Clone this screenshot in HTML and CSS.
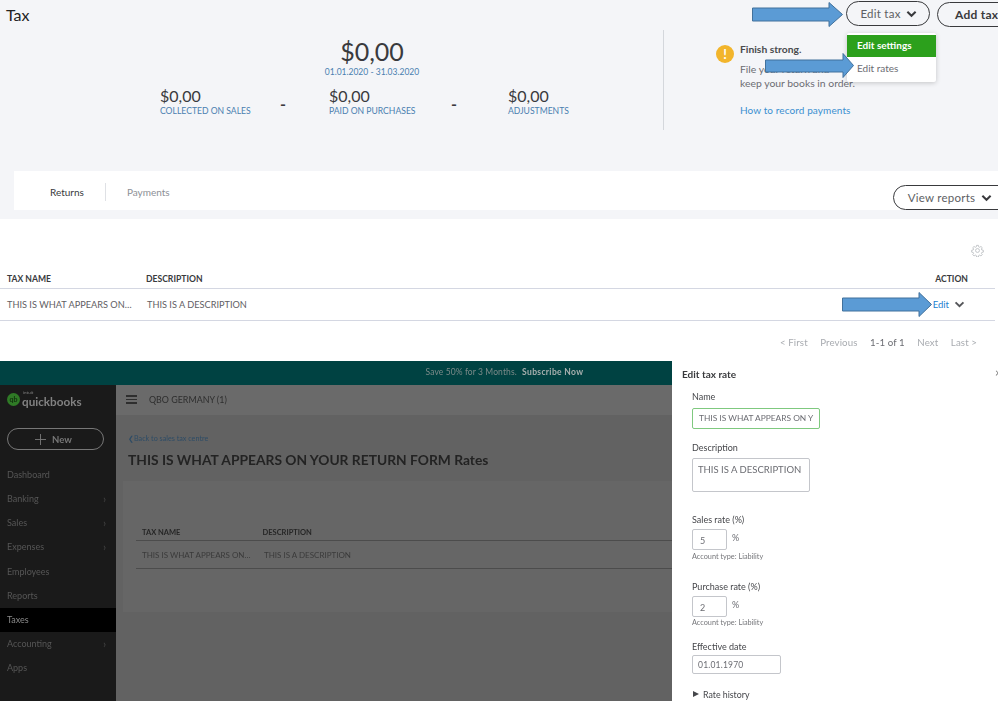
FILE: index.html
```html
<!DOCTYPE html>
<html lang="en">
<head>
<meta charset="utf-8">
<title>Tax</title>
<link rel="stylesheet" href="styles.css">
</head>
<body>
<div class="page">
  <section class="tax-top">
    <header class="tax-head">
      <h1 class="tax-title">Tax</h1>
      <div class="tax-actions">
        <button class="pill pill-edit">Edit tax <svg class="chev" viewBox="0 0 12 8"><path d="M1.500 1.500 6 6l4.500-4.500" /></svg></button>
        <button class="pill pill-add">Add tax</button>
      </div>
    </header>
    <div class="tax-summary">
      <div class="figures">
        <div class="total">
          <div class="total-amount">$0,00</div>
          <div class="total-range">01.01.2020 - 31.03.2020</div>
        </div>
        <div class="parts">
          <div class="part part-a"><div class="part-amount">$0,00</div><div class="part-label">COLLECTED ON SALES</div></div>
          <div class="minus">-</div>
          <div class="part part-b"><div class="part-amount">$0,00</div><div class="part-label">PAID ON PURCHASES</div></div>
          <div class="minus">-</div>
          <div class="part part-c"><div class="part-amount">$0,00</div><div class="part-label">ADJUSTMENTS</div></div>
        </div>
      </div>
      <aside class="notice">
        <div class="notice-icon">!</div>
        <div class="notice-body">
          <div class="notice-title">Finish strong.</div>
          <p class="notice-text">File your return and<br>keep your books in order.</p>
          <a class="notice-link">How to record payments</a>
        </div>
      </aside>
    </div>
    <nav class="tabs">
      <span class="tab tab-on">Returns</span>
      <span class="tab">Payments</span>
      <button class="pill pill-reports">View reports <svg class="chev" viewBox="0 0 12 8"><path d="M1.500 1.500 6 6l4.500-4.500" /></svg></button>
    </nav>
    <div class="menu">
      <div class="menu-item menu-item-on">Edit settings</div>
      <div class="menu-item">Edit rates</div>
    </div>
  </section>

  <section class="rates">
    <div class="gear-row">
      <svg class="gear" viewBox="0 0 24 24"><circle cx="12" cy="12" r="3.600"/><path d="M10.300 2.500h3.400l.5 2.800 1.800.8 2.400-1.600 2.400 2.400-1.600 2.400.8 1.800 2.800.5v3.400l-2.800.5-.8 1.800 1.600 2.400-2.400 2.400-2.400-1.600-1.800.8-.5 2.800h-3.400l-.5-2.800-1.800-.8-2.400 1.600-2.400-2.400 1.600-2.400-.8-1.800-2.800-.5v-3.400l2.800-.5.8-1.800-1.600-2.400 2.400-2.400 2.400 1.600 1.800-.8z"/></svg>
    </div>
    <div class="row row-head">
      <span class="col-name">TAX NAME</span>
      <span class="col-desc">DESCRIPTION</span>
      <span class="col-action">ACTION</span>
    </div>
    <div class="row row-body">
      <span class="col-name">THIS IS WHAT APPEARS ON…</span>
      <span class="col-desc">THIS IS A DESCRIPTION</span>
      <span class="col-edit"><a class="edit-link">Edit</a><svg class="chev chev-edit" viewBox="0 0 12 8"><path d="M1.500 1.500 6 6l4.500-4.500" /></svg></span>
    </div>
    <div class="pager">
      <span>&lt; First</span><span>Previous</span><span class="pager-now">1-1 of 1</span><span>Next</span><span>Last &gt;</span>
    </div>
  </section>

  <section class="app">
    <div class="app-shell">
      <div class="promo">Save 50% for 3 Months. <b>Subscribe Now</b></div>
      <div class="app-body">
        <aside class="side">
          <div class="logo">
            <span class="logo-mark">qb</span>
            <span class="logo-text"><small>intuit</small><span>quickbooks</span></span>
          </div>
          <div class="new-btn"><svg class="plus" viewBox="0 0 12 12"><path d="M6 0v12M0 6h12"/></svg>New</div>
          <ul class="side-nav">
            <li>Dashboard</li>
            <li class="has-sub">Banking</li>
            <li class="has-sub">Sales</li>
            <li class="has-sub">Expenses</li>
            <li>Employees</li>
            <li>Reports</li>
            <li class="side-on">Taxes</li>
            <li class="has-sub">Accounting</li>
            <li>Apps</li>
          </ul>
        </aside>
        <main class="app-main">
          <div class="app-top"><span class="burger"></span>QBO GERMANY (1)</div>
          <div class="app-content">
            <div class="back">❮Back to sales tax centre</div>
            <h2 class="app-title">THIS IS WHAT APPEARS ON YOUR RETURN FORM Rates</h2>
            <div class="app-card">
              <div class="app-row app-row-head"><span class="app-col-name">TAX NAME</span><span>DESCRIPTION</span></div>
              <div class="app-row app-row-body"><span class="app-col-name">THIS IS WHAT APPEARS ON…</span><span>THIS IS A DESCRIPTION</span></div>
            </div>
          </div>
        </main>
      </div>
    </div>
    <form class="panel">
      <div class="panel-title">Edit tax rate <span class="panel-close">×</span></div>
      <label class="fld-label">Name</label>
      <div class="input input-name">THIS IS WHAT APPEARS ON Y</div>
      <label class="fld-label fld-desc">Description</label>
      <div class="input input-desc">THIS IS A DESCRIPTION</div>
      <label class="fld-label fld-sales">Sales rate (%)</label>
      <div class="rate-line"><div class="input input-rate">5</div><span class="pct">%</span></div>
      <div class="hint hint-sales">Account type: Liability</div>
      <label class="fld-label fld-purchase">Purchase rate (%)</label>
      <div class="rate-line rate-line-2"><div class="input input-rate">2</div><span class="pct">%</span></div>
      <div class="hint">Account type: Liability</div>
      <label class="fld-label fld-date">Effective date</label>
      <div class="input input-date">01.01.1970</div>
      <div class="history"><span class="tri"></span>Rate history</div>
    </form>
  </section>

  <svg class="arrow arrow-1" viewBox="0 0 91 25"><path d="M.5 6h76.500V.5L90.500 12.500 77 24.500V19H.5z"/></svg>
  <svg class="arrow arrow-2" viewBox="0 0 89 25"><path d="M.5 7h77.500V.5L88.500 12.500 78 24.500V19H.5z"/></svg>
  <svg class="arrow arrow-3" viewBox="0 0 90 25"><path d="M.5 6h76.500V.5L89.500 12.500 77 24.500V19H.5z"/></svg>
</div>
</body>
</html>
```

FILE: styles.css
```css
* { box-sizing: border-box; }
html, body { margin: 0; padding: 0; background: #fff; }
body { width: 998px; height: 701px; overflow: hidden; font-family: Lato, "Open Sans", "Liberation Sans", sans-serif; color: #393a3d; }
.page { position: relative; width: 998px; height: 701px; overflow: hidden; filter: blur(.45px); }

.tax-top { position: relative; height: 219px; background: #f4f5f8; }
.tax-head { display: flex; justify-content: space-between; height: 30px; }
.tax-title { margin: 5px 0 0 6px; font-size: 16px; line-height: 20px; font-weight: 400; color: #222; }
.tax-actions { display: flex; gap: 7px; margin: 0 -30px 0 0; padding-top: 1px; }
.pill { display: flex; align-items: center; justify-content: center; height: 25px; border: 1.500px solid #393a3d; border-radius: 13px; background: #f4f5f8; font: 400 11.500px Lato, sans-serif; letter-spacing: .25px; color: #5d6063; padding: 0; white-space: nowrap; }
.pill-edit { width: 84px; gap: 5px; padding-left: 1px; }
.pill-add { width: 91px; margin-top: 1px; font-size: 12px; font-weight: 700; color: #393a3d; justify-content: flex-start; padding-left: 17px; }
.chev { width: 11px; height: 8px; fill: none; stroke: #393a3d; stroke-width: 2.200; }

.tax-summary { display: flex; height: 100px; }
.figures { width: 664px; display: flex; flex-direction: column; align-items: flex-start; border-right: 1px solid #d4d7dc; }
.total { width: 100%; text-align: center; padding-left: 81px; margin-top: 7px; }
.total-amount { font-size: 25px; line-height: 28px; color: #393a3d; }
.total-range { font-size: 8.500px; line-height: 11px; color: #4a7fb0; margin-top: 2px; }
.parts { display: flex; align-items: center; margin-top: 9px; padding-left: 160px; }
.part-amount { font-size: 16px; line-height: 17px; color: #393a3d; }
.part-label { font-size: 8.600px; line-height: 11px; margin-top: 2px; color: #4a7fb0; white-space: nowrap; }
.minus { font-size: 16px; font-weight: 700; line-height: 16px; margin-top: 3px; }
.part-a { width: 120px; }
.part-b { width: 122px; margin-left: 43px; }
.part-c { margin-left: 51px; }

.notice { display: flex; gap: 6px; padding: 15px 0 0 52px; }
.notice-icon { width: 18px; height: 18px; border-radius: 50%; background: #f2b52c; color: #fff; font-size: 13px; font-weight: 700; line-height: 18px; text-align: center; }
.notice-title { font-size: 10.300px; font-weight: 700; line-height: 12px; margin-top: -2px; color: #4a4b4e; }
.notice-text { margin: 7px 0 0; font-size: 10.400px; line-height: 14px; color: #6b6c72; white-space: nowrap; }
.notice-link { display: block; margin-top: 14px; font-size: 10px; line-height: 13px; letter-spacing: .1px; color: #3a8fd0; }

.tabs { position: relative; display: flex; align-items: center; height: 39px; margin: 41px 0 0 14px; background: #fff; padding: 3px 0 0 36px; font-size: 10px; }
.tab { color: #8d9096; }
.tab-on { color: #393a3d; padding-right: 21px; margin-right: 21px; border-right: 1px solid #dfe1e5; line-height: 18px; }
.pill-reports { position: absolute; left: 879px; top: 14px; width: 122px; height: 25px; gap: 6px; background: #fff; z-index: 1; padding-right: 8px; }

.menu { position: absolute; left: 847px; top: 33px; width: 89px; height: 49px; background: #fff; box-shadow: 0 1px 5px rgba(0,0,0,.2); border-radius: 2px; padding-top: 2px; font-size: 10px; }
.menu-item { height: 22px; line-height: 22px; padding-left: 10px; color: #6b6c72; }
.menu-item-on { background: #2ca01c; color: #fff; font-weight: 700; line-height: 20px; }

.rates { height: 142px; background: #fff; }
.gear-row { display: flex; justify-content: flex-end; height: 44px; padding: 25px 14px 0 0; }
.gear { width: 13px; height: 13px; fill: none; stroke: #b4b7bb; stroke-width: 1.400; }
.row { display: flex; align-items: center; margin-right: 3px; padding-left: 7px; white-space: nowrap; }
.row-head { height: 26px; border-bottom: 1.500px solid #d4d7e2; font-weight: 700; color: #393a3d; font-size: 8.600px; padding-top: 7px; }
.row-body { height: 32px; border-bottom: 1.500px solid #d4d7e2; color: #5f6064; font-size: 9.200px; }
.col-name { width: 139px; }
.row-body .col-name { width: 140px; }
.col-action { margin-left: auto; margin-right: 27px; }
.col-edit { display: flex; align-items: center; gap: 5px; margin-left: auto; margin-right: 30px; }
.edit-link { color: #1b80d0; font-size: 9.500px; }
.chev-edit { width: 11px; height: 7px; stroke: #55565a; }
.pager { display: flex; justify-content: flex-end; gap: 12.500px; padding: 15px 21px 0 0; font-size: 9.700px; letter-spacing: .1px; color: #a8abb0; }
.pager-now { color: #6b6c72; }

.app { display: flex; height: 340px; }
.app-shell { width: 672px; flex: none; display: flex; flex-direction: column; }
.promo { height: 24px; background: #004242; color: #7c8a89; text-align: center; font-size: 8.500px; line-height: 23px; padding-left: 337px; letter-spacing: .1px; white-space: nowrap; }
.promo b { margin-left: 3px; letter-spacing: .35px; color: #a8b0af; }
.app-body { flex: 1; display: flex; }
.side { width: 116px; background: #1a1a1a; color: #565656; font-size: 9px; }
.logo { display: flex; align-items: center; gap: 2px; height: 30px; padding: 0 0 2px 7px; }
.logo-mark { width: 13px; height: 13px; margin-top: 1px; border-radius: 50%; background: #2f7a26; color: #12300e; font-size: 7px; font-weight: 700; line-height: 12px; text-align: center; }
.logo-text { display: flex; flex-direction: column; gap: 1px; font-size: 11.700px; font-weight: 700; color: #828282; line-height: 11px; }
.logo-text small { padding-left: 1px; font-size: 4.500px; line-height: 4px; font-weight: 400; }
.new-btn { display: flex; align-items: center; justify-content: center; gap: 6px; margin: 13px 12px 0 7px; padding-right: 4px; height: 22px; border: 1px solid #777; border-radius: 11px; color: #777; font-size: 9.500px; font-weight: 700; }
.plus { width: 11px; height: 11px; fill: none; stroke: #777; stroke-width: 1; }
.side-nav { list-style: none; margin: 13px 0 0; padding: 0; }
.side-nav li { position: relative; height: 24.150px; line-height: 24px; padding-left: 7px; }
.has-sub::after { content: "›"; position: absolute; right: 10px; top: 0; color: #444; font-size: 11px; }
.side-nav .side-on { background: #000; color: #8a8a8a; }

.app-main { flex: 1; display: flex; flex-direction: column; background: #626262; }
.app-top { display: flex; align-items: center; height: 30px; padding: 0 0 1px 10px; background: #6a6a6a; color: #2e2e2e; font-size: 8.900px; }
.burger { width: 11px; height: 9px; margin-right: 12px; border-top: 2px solid #2e2e2e; border-bottom: 2px solid #2e2e2e; position: relative; }
.burger::after { content: ""; position: absolute; left: 0; right: 0; top: 1.500px; height: 1.500px; background: #2e2e2e; }
.app-content { flex: 1; padding-top: 19px; }
.back { margin-left: 12px; font-size: 7.200px; line-height: 10px; color: #2e4c66; }
.app-title { margin: 7px 0 0 12px; font-size: 13.800px; line-height: 18px; font-weight: 700; color: #232323; white-space: nowrap; }
.app-card { margin: 12px 0 0 7px; height: 131px; background: #666; padding: 45px 0 0 13px; }
.app-row { display: flex; align-items: center; white-space: nowrap; padding-left: 6px; }
.app-row-head { height: 15px; font-size: 7.500px; font-weight: 700; color: #262626; border-bottom: 1px solid #4c4c4c; padding-bottom: 2px; }
.app-row-body { height: 28px; font-size: 8px; color: #3a3a3a; border-bottom: 1px solid #4c4c4c; }
.app-col-name { width: 120.500px; }
.app-row-body .app-col-name { width: 122px; }

.panel { flex: 1; background: #fff; display: flex; flex-direction: column; align-items: flex-start; padding: 8px 0 0 10px; color: #393a3d; }
.panel > * { flex: none; }
.panel-title { position: relative; width: 100%; font-size: 10px; font-weight: 700; line-height: 10px; margin-bottom: 12px; white-space: nowrap; }
.panel-close { position: absolute; left: 313px; top: -1px; color: #777; font-weight: 400; font-size: 11px; }
.fld-label { margin-left: 10px; font-size: 9px; line-height: 11px; color: #45464a; }
.input { margin-left: 10px; border: 1px solid #c4c6cb; border-radius: 2px; font-size: 9px; color: #6b6c72; white-space: nowrap; }
.input-name { width: 128px; height: 21px; margin-top: 6px; font-size: 8.400px; line-height: 19px; padding-left: 6px; border-color: #7fc97f; }
.fld-desc { margin-top: 13px; }
.input-desc { width: 118px; height: 34px; margin-top: 5px; padding: 5px 0 0 5px; line-height: 11px; font-size: 9.500px; }
.fld-sales { margin-top: 22px; }
.rate-line { display: flex; margin-top: 4px; }
.rate-line-2 { margin-top: 3.500px; }
.input-rate { width: 35px; height: 21px; line-height: 21px; padding-left: 7px; }
.pct { margin-left: 5px; font-size: 9px; line-height: 17px; color: #6b6c72; }
.hint { margin: 1px 0 0 10px; font-size: 7.300px; line-height: 9px; color: #75767a; }
.hint-sales { margin-top: 2px; }
.fld-purchase { margin-top: 20px; }
.fld-date { margin-top: 14.500px; }
.input-date { width: 89px; height: 19.500px; margin-top: 2.500px; line-height: 18px; padding-left: 5px; font-size: 8.500px; letter-spacing: .2px; }
.history { display: flex; align-items: center; gap: 4px; margin: 14.500px 0 0 11px; font-size: 8.800px; line-height: 11px; color: #45464a; }
.tri { width: 0; height: 0; border-left: 6px solid #45464a; border-top: 3.500px solid transparent; border-bottom: 3.500px solid transparent; }

.arrow { position: absolute; fill: #5b9bd5; stroke: #41719c; stroke-width: 1; overflow: visible; }
.arrow-1 { left: 752px; top: 2px; width: 91px; height: 25px; }
.arrow-2 { left: 765px; top: 53px; width: 89px; height: 25px; }
.arrow-3 { left: 842px; top: 292px; width: 90px; height: 25px; }
```
